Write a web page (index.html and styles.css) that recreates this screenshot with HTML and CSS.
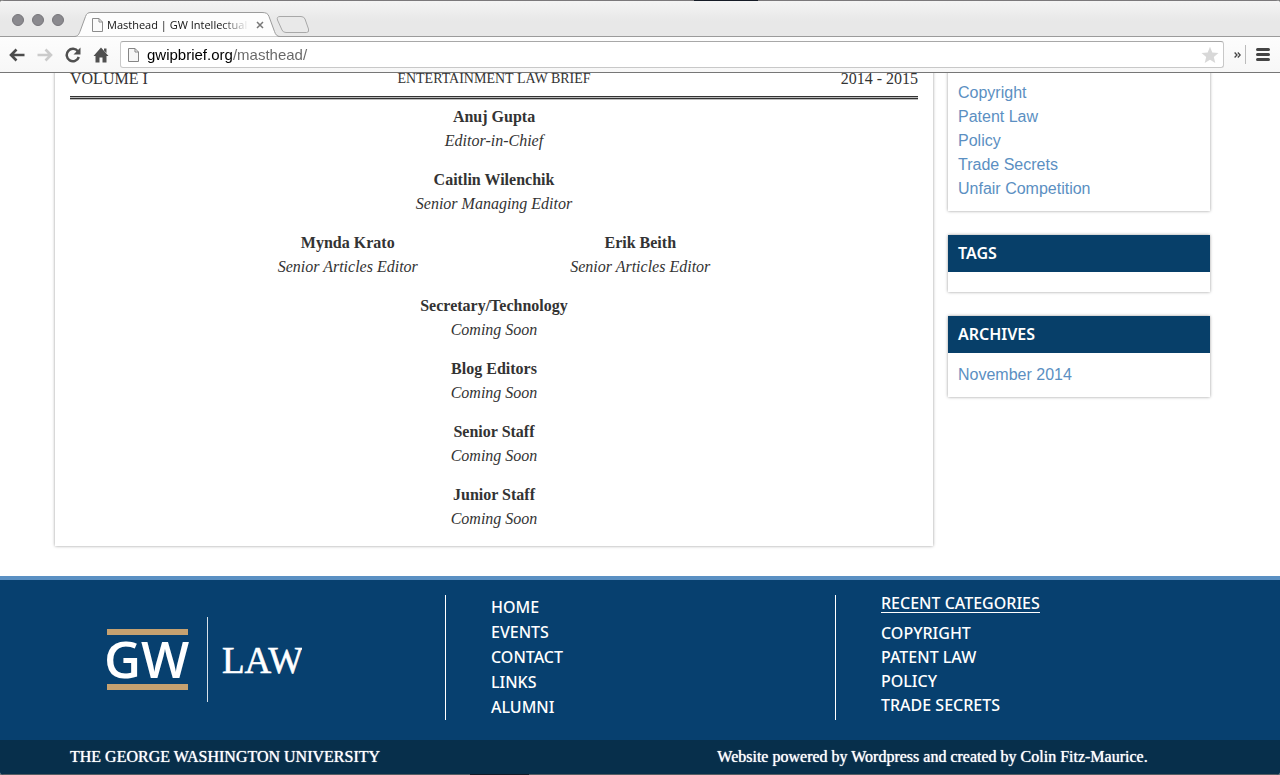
FILE: index.html
```html
<!DOCTYPE html>
<html lang="en">
<head>
<meta charset="utf-8">
<title>Masthead | GW Intellectual Property Brief</title>
<link rel="stylesheet" href="styles.css">
</head>
<body>
<div class="window">
  <header class="chrome">
    <div class="tab-strip">
      <span class="edge-mark edge-mark-top"></span>
      <div class="window-buttons"><button aria-label="Close window"></button><button aria-label="Minimize window"></button><button aria-label="Zoom window"></button></div>
      <div class="tab">
        <svg class="tab-shape" viewBox="0 0 206 25" preserveAspectRatio="none" aria-hidden="true"><path d="M0 24.500C4 24.500 5 22 6 19.500L11.500 4.500C12.500 1.500 14 .5 17 .5H188C192 .5 194 1.500 195 4.500L200.500 19.500C201.500 22.500 203 24.500 206 24.500" fill="#fdfdfd" stroke="#9b9b9b"/></svg>
        <svg class="page-icon" viewBox="0 0 11 14" aria-hidden="true"><path d="M.5.5H7L10.500 4V13.500H.5ZM7 .5V4H10.500" fill="#fbfbfb" stroke="#8c8c8c"/></svg>
        <span class="tab-title">Masthead | GW Intellectual</span>
        <button class="tab-close" aria-label="Close tab"><svg viewBox="0 0 8 8"><path d="M1 1L7 7M7 1L1 7" stroke="#777" stroke-width="1.500"/></svg></button>
      </div>
      <button class="new-tab" aria-label="New tab"><svg viewBox="0 0 34 17"><path d="M4 .5H25Q28 .5 29 3L32.500 13Q33.500 16.500 30.500 16.500H10Q7 16.500 6 14L1.500 4Q.5 .5 4 .5Z" fill="#e9e9e9" stroke="#a8a8a8"/></svg></button>
    </div>
    <div class="toolbar">
      <button class="tool" aria-label="Back"><svg viewBox="0 0 16 16"><path d="M15.500 8H2.500M7.500 2.500L2 8L7.500 13.500" fill="none" stroke="#4b4b4b" stroke-width="2.600"/></svg></button>
      <button class="tool" aria-label="Forward"><svg viewBox="0 0 16 16"><path d="M.5 8H13.500M8.500 2.500L14 8L8.500 13.500" fill="none" stroke="#cbcbcb" stroke-width="2.600"/></svg></button>
      <button class="tool" aria-label="Reload"><svg viewBox="0 0 16 16"><path d="M13 4.500A6.200 6.200 0 1 0 13.800 10" fill="none" stroke="#505050" stroke-width="2.500"/><path d="M15.500.5V7.500H8.500Z" fill="#505050"/></svg></button>
      <button class="tool" aria-label="Home"><svg viewBox="0 0 16 16"><path d="M8 .5L15.500 9H13.500V15.500H9.500V10.500H6.500V15.500H2.500V9H.5ZM11 1.500H13.500V6L11 3.500Z" fill="#505050"/></svg></button>
      <div class="address">
        <svg class="page-icon" viewBox="0 0 11 14" aria-hidden="true"><path d="M.5.5H7L10.500 4V13.500H.5ZM7 .5V4H10.500" fill="#f6f6f6" stroke="#858585"/></svg>
        <input type="text" aria-label="Address" value="gwipbrief.org/masthead/">
        <button class="star" aria-label="Bookmark this page"><svg viewBox="0 0 18 18"><path d="M9 .8L11.300 6.500L17.500 7L12.800 11L14.300 17L9 13.700L3.700 17L5.200 11L.5 7L6.700 6.500Z" fill="#d8d8d8"/></svg></button>
      </div>
      <button class="more" aria-label="More extensions"><svg viewBox="0 0 7 6"><path d="M.6.5L3 3L.6 5.500M3.800.5L6.200 3L3.800 5.500" fill="none" stroke="#444" stroke-width="1.300"/></svg></button>
      <button class="menu" aria-label="Menu"><svg viewBox="0 0 14 13"><path d="M1.500 1.500H12.500M1.500 6.500H12.500M1.500 11.500H12.500" stroke="#444" stroke-width="3" stroke-linecap="round"/></svg></button>
    </div>
  </header>

  <div class="viewport">
    <div class="container content">
      <main class="card masthead">
        <div class="issue"><span>VOLUME I</span><span>ENTERTAINMENT LAW BRIEF</span><span>2014 - 2015</span></div>
        <p><strong>Anuj Gupta</strong><em>Editor-in-Chief</em></p>
        <p><strong>Caitlin Wilenchik</strong><em>Senior Managing Editor</em></p>
        <div class="pair">
          <p><strong>Mynda Krato</strong><em>Senior Articles Editor</em></p>
          <p><strong>Erik Beith</strong><em>Senior Articles Editor</em></p>
        </div>
        <p><strong>Secretary/Technology</strong><em>Coming Soon</em></p>
        <p><strong>Blog Editors</strong><em>Coming Soon</em></p>
        <p><strong>Senior Staff</strong><em>Coming Soon</em></p>
        <p><strong>Junior Staff</strong><em>Coming Soon</em></p>
      </main>
      <aside class="sidebar">
        <section class="card">
          <ul class="categories"><li><a href="#">Copyright</a></li><li><a href="#">Patent Law</a></li><li><a href="#">Policy</a></li><li><a href="#">Trade Secrets</a></li><li><a href="#">Unfair Competition</a></li></ul>
        </section>
        <section class="card"><h2>TAGS</h2><div class="tag-list"></div></section>
        <section class="card"><h2>ARCHIVES</h2><ul><li><a href="#">November 2014</a></li></ul></section>
      </aside>
    </div>

    <footer class="footer">
      <div class="container footer-columns">
        <a class="logo" href="#" aria-label="GW Law">
          <svg viewBox="0 0 196 86" role="img">
            <rect x="1" y="13" width="81" height="6" fill="#c5a170"/>
            <rect x="1" y="68" width="81" height="6" fill="#c5a170"/>
            <text class="logo-gw" x="-2" y="62">GW</text>
            <rect x="101" y="1" width="1" height="85" fill="#d5e0e9"/>
            <text class="logo-law" x="116" y="57">LAW</text>
          </svg>
        </a>
        <nav class="footer-nav">
          <ul><li><a href="#">HOME</a></li><li><a href="#">EVENTS</a></li><li><a href="#">CONTACT</a></li><li><a href="#">LINKS</a></li><li><a href="#">ALUMNI</a></li></ul>
        </nav>
        <section class="footer-recent">
          <h3>RECENT CATEGORIES</h3>
          <ul><li><a href="#">COPYRIGHT</a></li><li><a href="#">PATENT LAW</a></li><li><a href="#">POLICY</a></li><li><a href="#">TRADE SECRETS</a></li></ul>
        </section>
      </div>
      <div class="credits">
        <div class="container credits-row"><span>THE GEORGE WASHINGTON UNIVERSITY</span><span class="powered">Website powered by Wordpress and created by Colin Fitz-Maurice.</span></div>
        <span class="edge-mark edge-mark-bottom"></span>
      </div>
    </footer>
  </div>
</div>
</body>
</html>
```

FILE: styles.css
```css
* { box-sizing: border-box; }
body { margin: 0; background: #777; font: 16px/24px "Liberation Serif", serif; color: #333; }
ul, h2, h3, p { margin: 0; padding: 0; list-style: none; }
a { text-decoration: none; }
button { padding: 0; border: 0; background: none; display: flex; align-items: center; justify-content: center; }
svg { display: block; }

.window { min-height: 100vh; background: #fff; border-radius: 4px; overflow: hidden; display: flex; flex-direction: column; }

/* Browser chrome */
.tab-strip { position: relative; height: 37px; display: flex; align-items: flex-end; background: linear-gradient(#f4f4f4, #e8e8e8 20px); border-top: 1px solid #7b797b; border-bottom: 1px solid #9b9b9b; }
.edge-mark { position: absolute; height: 1px; background: #151b26; }
.edge-mark-top { top: -1px; left: 694px; width: 64px; }
.edge-mark-bottom { bottom: -1px; left: 470px; width: 59px; }
.window-buttons { display: flex; gap: 8px; padding: 0 10px 10px 12px; }
.window-buttons button { width: 12px; height: 12px; border-radius: 50%; background: #8a898e; border: 1px solid #77767b; }
.tab { position: relative; width: 206px; height: 25px; margin-bottom: -1px; padding: 0 15px 0 18px; display: flex; align-items: center; gap: 4px; }
.tab > * { position: relative; }
.tab .tab-shape { position: absolute; inset: 0; width: 100%; height: 100%; }
.page-icon { width: 11px; height: 14px; flex: none; }
.tab-title { flex: 1; overflow: hidden; white-space: nowrap; font: 500 11px/24px "Open Sans", sans-serif; background: linear-gradient(90deg, #111 80%, transparent); background-clip: text; color: transparent; }
.tab-close { width: 10px; height: 12px; margin-left: 2px; }
.tab-close svg { width: 8px; height: 8px; }
.new-tab { margin: 0 0 3px -4px; }
.new-tab svg { width: 34px; height: 17px; }
.toolbar { height: 36px; padding: 0 10px 0 9px; display: flex; align-items: center; gap: 12px; background: linear-gradient(#fdfdfd, #f7f7f7); border-bottom: 1px solid #777; }
.tool { width: 16px; height: 16px; }
.tool svg { width: 16px; height: 16px; }
.address { flex: 1; height: 27px; margin-left: -1px; display: flex; align-items: center; gap: 8px; padding: 0 4px 0 7px; background: #fff; border: 1px solid #c8c8c8; border-top-color: #a8a8a8; border-radius: 3px; }
.address input { flex: 1; border: 0; padding: 0; outline: 0; font: 15px/20px "Liberation Sans", sans-serif; background: linear-gradient(90deg, #000 86px, #666 86px); background-clip: text; -webkit-text-fill-color: transparent; }
.star svg { width: 18px; height: 18px; }
.more { height: 19px; padding-right: 4px; margin-left: -2px; border-right: 1px solid #bbb; }
.more svg { width: 7px; height: 6px; }
.menu { margin-left: -2px; }
.menu svg { width: 14px; height: 13px; }

/* Page */
.viewport { flex: 1; overflow: hidden; display: flex; flex-direction: column; }
.container { width: 100%; max-width: 1170px; margin: 0 auto; }
.content { display: grid; grid-template-columns: 878fr 262fr; gap: 15px; align-items: start; padding-right: 15px; margin-top: -6px; margin-bottom: 30px; }
.card { background: #fff; box-shadow: 0 0 3px rgba(0, 0, 0, 0.4); }
.masthead { padding: 0 15px 15px; display: flex; flex-direction: column; gap: 15px; text-align: center; }
.issue { display: grid; grid-template-columns: 1fr auto 1fr; padding-bottom: 5px; margin-bottom: -9px; border-bottom: 3px double #333; background: linear-gradient(#bbb, #bbb) bottom / 100% 3px no-repeat border-box; box-shadow: 0 1px #bbb; font-size: 16px; text-align: left; }
.issue span:nth-child(2) { font-size: 14px; }
.issue span:last-child { text-align: right; }
.masthead strong, .masthead em { display: block; }
.pair { display: grid; grid-template-columns: 1fr 1fr; width: 100%; max-width: 585px; margin: 0 auto; }
.sidebar { display: grid; gap: 24px; font-family: "Liberation Sans", sans-serif; }
.sidebar ul { padding: 10px; }
.sidebar .categories { padding-top: 14px; }
.sidebar a { color: #5b8fc2; }
.sidebar h2 { padding: 0 10px; font: 600 16px/37px "Noto Sans", "Open Sans", sans-serif; color: #fff; background: #073f69; }
.tag-list { height: 20px; }

/* Footer */
.footer { flex: 1; display: flex; flex-direction: column; color: #fff; background: #07406f; border-top: 4px solid #5a90c3; font: 500 16px/24px "Noto Sans", "Open Sans", sans-serif; }
.footer a { color: #fff; }
.footer-columns { flex: 1; display: grid; grid-template-columns: repeat(3, 1fr); padding: 15px 0 20px; }
.logo { padding: 21px 0 0 51px; }
.logo svg { width: 196px; height: 86px; fill: #fff; }
.logo-gw { font: 600 51px "Open Sans", sans-serif; }
.logo-law { font: 37px "Liberation Serif", serif; stroke: #fff; stroke-width: 0.6; }
.footer-nav, .footer-recent { border-left: 1px solid #fff; padding-left: 45px; }
.footer-nav { line-height: 25px; }
.footer-recent h3 { width: fit-content; font: inherit; line-height: 17px; border-bottom: 1px solid #fff; margin-bottom: 8px; }
.credits { position: relative; height: 35px; background: #072f4b; border-bottom: 1px solid #555d63; font: 16px/34px "Liberation Serif", serif; text-shadow: 0 0 1px #fff; }
.credits-row { display: grid; grid-template-columns: 1fr 1fr; }
.credits-row span:first-child { padding-left: 15px; }
.powered { text-align: center; }
```
